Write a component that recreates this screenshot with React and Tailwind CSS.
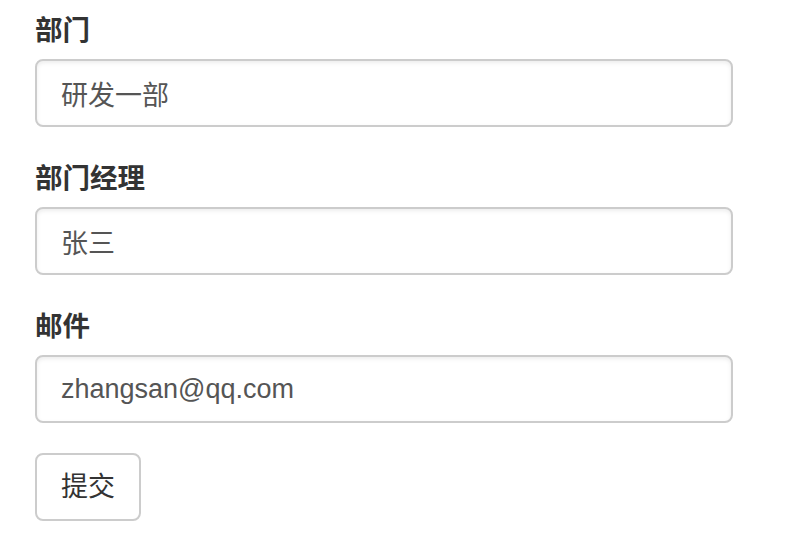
export default function App() {
  const fields = [
    { label: "部门", value: "研发一部" },
    { label: "部门经理", value: "张三" },
    { label: "邮件", value: "zhangsan@qq.com" },
  ];

  return (
    <div
      className="min-h-screen bg-white pl-[35px] pt-[9px]"
      style={{ fontFamily: '"Liberation Sans", "Noto Sans CJK SC", sans-serif' }}
    >
      <form className="w-[698px]" onSubmit={(e) => e.preventDefault()}>
        {fields.map((f) => (
          <div key={f.label} className="mb-[30px]">
            <label className="mb-[6px] block text-[27.5px] leading-[44px] font-bold text-[#333]">
              {f.label}
            </label>
            <input
              defaultValue={f.value}
              className="block h-[68px] w-full rounded-[8px] border-2 border-[#ccc] bg-white px-[24px] py-[12px] text-[27px] text-[#555] shadow-[inset_0_2px_4px_rgba(0,0,0,0.075)] outline-none"
            />
          </div>
        ))}
        <button
          type="submit"
          className="h-[68px] rounded-[8px] border-2 border-[#ccc] bg-white px-[24px] text-[27px] text-[#333]"
        >
          提交
        </button>
      </form>
    </div>
  );
}
